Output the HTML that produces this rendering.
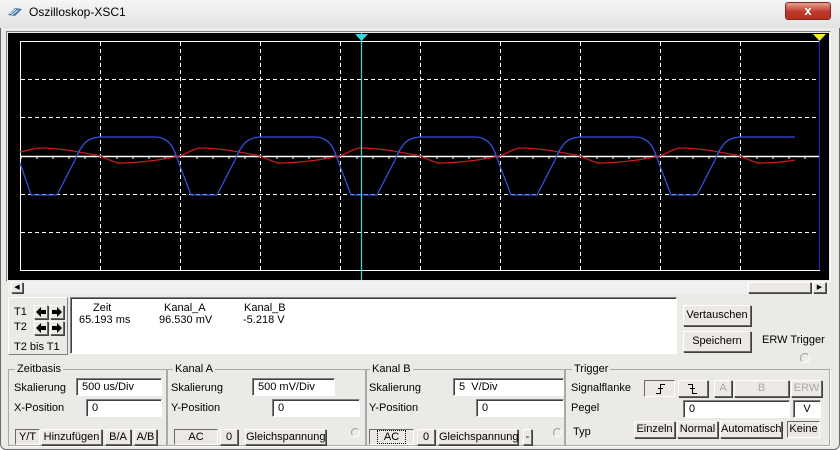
<!DOCTYPE html>
<html><head><meta charset="utf-8"><style>
*{margin:0;padding:0;box-sizing:border-box}
body{width:840px;height:450px;overflow:hidden;background:#fff;font-family:"Liberation Sans",sans-serif;font-size:11px;color:#000;position:relative}
.a{position:absolute}
.win{left:0;top:0;width:840px;height:450px;background:#eceae6;border:1px solid #6b6b6b;border-radius:6px}
.title{left:0;top:0;width:840px;height:28px;background:linear-gradient(#f6f6f6,#e2e2e2)}
.btn{position:absolute;background:#ece9e4;border:1px solid;border-color:#fff #6a6a6a #6a6a6a #fff;box-shadow:1px 1px 0 #404040;text-align:center;line-height:15px;white-space:nowrap}
.inp{position:absolute;background:#fff;border:1px solid;border-color:#808080 #fff #fff #808080;box-shadow:inset 1px 1px 0 #404040;padding-left:5px;line-height:16px}
.grp{position:absolute;border:1px solid #a9a9a9;box-shadow:1px 1px 0 #fff}
.gt{position:absolute;background:#eceae6;padding:0 2px;line-height:12px}
.dis{color:#a8a8a8}
.btn svg{display:block;margin:auto}
</style></head><body>
<div class="a win"></div>
<div class="a title"></div>
<svg class="a" style="left:7px;top:6px" width="16" height="12"><path d="M1 9 L8 2 L15 3 L8 10Z" fill="#4a6fa8"/><path d="M3 8 L9 3 M5 9 L11 4" stroke="#cfe" stroke-width="1"/></svg>
<div class="a" style="left:29px;top:5px;font-size:12px">Oszilloskop-XSC1</div>
<div class="a" style="left:785px;top:2px;width:46px;height:18px;background:linear-gradient(#e8a090,#c0392b 55%,#b03020);border:1px solid #7a2a20;border-radius:3px;color:#fff;text-align:center;font-weight:bold;font-size:13px;line-height:16px">x</div>

<div class="a" style="left:6px;top:31px;width:825px;height:251px;border:1px solid;border-color:#808080 #fff #fff #808080"></div>
<svg class="a" style="left:8px;top:33px" width="821" height="247" viewBox="8 33 821 247">
<rect x="8" y="33" width="821" height="247" fill="#000"/>
<rect x="20.5" y="41.5" width="799" height="229" fill="none" stroke="#fff"/>
<g stroke="#fff" stroke-dasharray="4 3">
<path d="M100.5 42V270M180.5 42V270M260.5 42V270M340.5 42V270M420.5 42V270M500.5 42V270M580.5 42V270M660.5 42V270M740.5 42V270"/>
<path d="M21 79.5H819M21 117.5H819M21 194.5H819M21 232.5H819"/>
</g>
<path d="M21 156.5H819" stroke="#fff" stroke-width="1.5"/>
<path d="M21 156V159M37 156V159M53 156V159M69 156V159M85 156V159M117 156V159M133 156V159M149 156V159M165 156V159M197 156V159M213 156V159M229 156V159M245 156V159M277 156V159M293 156V159M309 156V159M325 156V159M357 156V159M373 156V159M389 156V159M405 156V159M437 156V159M453 156V159M469 156V159M485 156V159M517 156V159M533 156V159M549 156V159M565 156V159M597 156V159M613 156V159M629 156V159M645 156V159M677 156V159M693 156V159M709 156V159M725 156V159M757 156V159M773 156V159M789 156V159M805 156V159" stroke="#fff"/>
<path d="M20 152 C30 150 35 148 40 148 C60 148 80 152 100 156 C110 160 115 163 120 163 C140 163 160 160 180 156 C190 152 195 148 200 148 C220 148 240 152 260 156 C270 160 275 163 280 163 C300 163 320 160 340 156 C350 152 355 148 360 148 C380 148 400 152 420 156 C430 160 435 163 440 163 C460 163 480 160 500 156 C510 152 515 148 520 148 C540 148 560 152 580 156 C590 160 595 163 600 163 C620 163 640 160 660 156 C670 152 675 148 680 148 C700 148 720 152 740 156 C750 160 755 163 760 163 C775 163 785 162 795 160" fill="none" stroke="#d01818" stroke-width="1.3"/>
<path d="M20 163 L31 195 L57 195 L75 160 C81 145 87 137 101 137 L155 137 C167 137 173 145 177 158 L191 195 L217 195 L235 160 C241 145 247 137 261 137 L315 137 C327 137 333 145 337 158 L351 195 L377 195 L395 160 C401 145 407 137 421 137 L475 137 C487 137 493 145 497 158 L511 195 L537 195 L555 160 C561 145 567 137 581 137 L635 137 C647 137 653 145 657 158 L671 195 L697 195 L715 160 C721 145 727 137 741 137 L795 137" fill="none" stroke="#3050e0" stroke-width="1.3"/>
<path d="M361.5 33V280" stroke="#20e0f0" stroke-width="1.2"/>
<path d="M355 34H368L361.5 41Z" fill="#30d8e0"/>
<path d="M819.5 41V270" stroke="#2020e0"/>
<path d="M813 34H826L819.5 41Z" fill="#f0f020"/>
</svg>
<div class="a" style="left:8px;top:281px;width:821px;height:13px;background:#f0f0f0"></div>
<div class="btn" style="left:11px;top:282px;width:12px;height:11px;line-height:9px;font-size:7px">◀</div>
<div class="btn" style="left:748px;top:282px;width:63px;height:11px"></div>
<div class="btn" style="left:813px;top:282px;width:13px;height:11px;line-height:9px;font-size:7px">▶</div>

<div class="a" style="left:8px;top:297px;width:60px;height:58px;border:1px solid;border-color:#fff #808080 #808080 #fff"></div>
<div class="a" style="left:14px;top:306px">T1</div>
<div class="a" style="left:14px;top:321px">T2</div>
<div class="a" style="left:14px;top:341px">T2 bis T1</div>
<div class="btn" style="left:34px;top:305px;width:14px;height:14px"><svg width="12" height="12"><path d="M1 6L6 1V4H11V8H6V11Z" fill="#000"/></svg></div>
<div class="btn" style="left:50px;top:305px;width:14px;height:14px"><svg width="12" height="12"><path d="M11 6L6 1V4H1V8H6V11Z" fill="#000"/></svg></div>
<div class="btn" style="left:34px;top:321px;width:14px;height:14px"><svg width="12" height="12"><path d="M1 6L6 1V4H11V8H6V11Z" fill="#000"/></svg></div>
<div class="btn" style="left:50px;top:321px;width:14px;height:14px"><svg width="12" height="12"><path d="M11 6L6 1V4H1V8H6V11Z" fill="#000"/></svg></div>
<div class="a" style="left:70px;top:297px;width:607px;height:57px;background:#fff;border:1px solid;border-color:#808080 #fff #fff #808080;box-shadow:inset 1px 1px 0 #404040"></div>
<div class="a" style="left:93px;top:302px">Zeit</div>
<div class="a" style="left:79px;top:314px">65.193 ms</div>
<div class="a" style="left:164px;top:302px">Kanal_A</div>
<div class="a" style="left:159px;top:314px">96.530 mV</div>
<div class="a" style="left:244px;top:302px">Kanal_B</div>
<div class="a" style="left:243px;top:314px">-5.218 V</div>
<div class="btn" style="left:683px;top:305px;width:68px;height:21px;line-height:19px">Vertauschen</div>
<div class="btn" style="left:683px;top:331px;width:68px;height:21px;line-height:19px">Speichern</div>
<div class="a" style="left:762px;top:334px">ERW Trigger</div>
<div class="a" style="left:800px;top:353px;width:10px;height:10px;border-radius:50%;border:1px solid #999;border-right-color:#fff;border-bottom-color:#fff"></div>

<div class="grp" style="left:8px;top:369px;width:159px;height:77px"></div>
<div class="gt" style="left:15px;top:363px">Zeitbasis</div>
<div class="a" style="left:14px;top:382px">Skalierung</div>
<div class="inp" style="left:76px;top:378px;width:86px;height:18px">500 us/Div</div>
<div class="a" style="left:14px;top:402px">X-Position</div>
<div class="inp" style="left:86px;top:399px;width:76px;height:18px">0</div>
<div class="btn" style="left:15px;top:429px;width:25px;height:16px;border-color:#6a6a6a #fff #fff #6a6a6a;box-shadow:none">Y/T</div>
<div class="btn" style="left:41px;top:429px;width:61px;height:16px">Hinzufügen</div>
<div class="btn" style="left:105px;top:429px;width:26px;height:16px">B/A</div>
<div class="btn" style="left:134px;top:429px;width:23px;height:16px">A/B</div>

<div class="grp" style="left:167px;top:369px;width:199px;height:77px"></div>
<div class="gt" style="left:173px;top:363px">Kanal A</div>
<div class="a" style="left:171px;top:382px">Skalierung</div>
<div class="inp" style="left:252px;top:378px;width:83px;height:18px">500 mV/Div</div>
<div class="a" style="left:171px;top:402px">Y-Position</div>
<div class="inp" style="left:272px;top:399px;width:88px;height:18px">0</div>
<div class="btn" style="left:174px;top:429px;width:44px;height:16px;border-color:#6a6a6a #fff #fff #6a6a6a;box-shadow:none">AC</div>
<div class="btn" style="left:220px;top:429px;width:18px;height:16px">0</div>
<div class="btn" style="left:245px;top:429px;width:81px;height:16px">Gleichspannung</div>
<div class="a" style="left:351px;top:428px;width:9px;height:9px;border-radius:50%;border:1px solid #999;border-right-color:#fff;border-bottom-color:#fff"></div>

<div class="grp" style="left:366px;top:369px;width:199px;height:77px"></div>
<div class="gt" style="left:370px;top:363px">Kanal B</div>
<div class="a" style="left:369px;top:382px">Skalierung</div>
<div class="inp" style="left:453px;top:378px;width:111px;height:18px">5&nbsp; V/Div</div>
<div class="a" style="left:369px;top:402px">Y-Position</div>
<div class="inp" style="left:476px;top:399px;width:88px;height:18px">0</div>
<div class="btn" style="left:369px;top:429px;width:45px;height:16px;border-color:#6a6a6a #fff #fff #6a6a6a;box-shadow:none"><span style="outline:1px dotted #000;padding:0 6px">AC</span></div>
<div class="btn" style="left:417px;top:429px;width:18px;height:16px">0</div>
<div class="btn" style="left:438px;top:429px;width:80px;height:16px">Gleichspannung</div>
<div class="btn" style="left:523px;top:429px;width:9px;height:16px">-</div>
<div class="a" style="left:553px;top:428px;width:9px;height:9px;border-radius:50%;border:1px solid #999;border-right-color:#fff;border-bottom-color:#fff"></div>

<div class="grp" style="left:565px;top:369px;width:265px;height:77px"></div>
<div class="gt" style="left:572px;top:363px">Trigger</div>
<div class="a" style="left:571px;top:382px">Signalflanke</div>
<div class="btn" style="left:644px;top:380px;width:31px;height:17px;border-color:#6a6a6a #fff #fff #6a6a6a;box-shadow:none;padding-top:2px"><svg width="12" height="11"><path d="M2 10.5H6.5V1.5H11M4 5.5H9" stroke="#000" fill="none"/></svg></div>
<div class="btn" style="left:678px;top:380px;width:30px;height:17px;padding-top:2px"><svg width="12" height="11"><path d="M1 1.5H5.5V10.5H10M3 5.5H8" stroke="#000" fill="none"/></svg></div>
<div class="btn dis" style="left:714px;top:380px;width:18px;height:17px">A</div>
<div class="btn dis" style="left:734px;top:380px;width:55px;height:17px">B</div>
<div class="btn dis" style="left:791px;top:380px;width:31px;height:17px">ERW</div>
<div class="a" style="left:571px;top:402px">Pegel</div>
<div class="inp" style="left:683px;top:400px;width:107px;height:18px">0</div>
<div class="inp" style="left:793px;top:400px;width:28px;height:18px;text-align:center;padding:0">V</div>
<div class="a" style="left:573px;top:426px">Typ</div>
<div class="btn" style="left:634px;top:421px;width:41px;height:17px">Einzeln</div>
<div class="btn" style="left:677px;top:421px;width:41px;height:17px">Normal</div>
<div class="btn" style="left:720px;top:421px;width:62px;height:17px">Automatisch</div>
<div class="btn" style="left:787px;top:421px;width:33px;height:17px;border-color:#6a6a6a #fff #fff #6a6a6a;box-shadow:none">Keine</div>
</body></html>
